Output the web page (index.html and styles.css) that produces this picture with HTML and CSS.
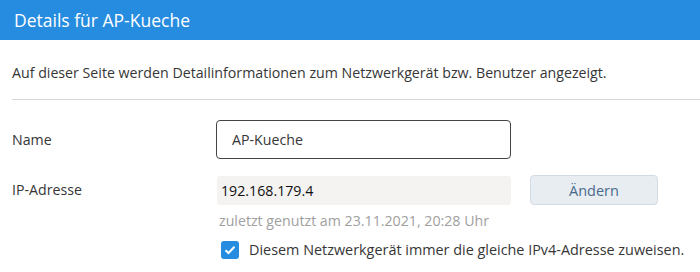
FILE: index.html
```html
<!DOCTYPE html>
<html lang="de">
<head>
    <meta charset="UTF-8">
    <meta name="viewport" content="width=device-width, initial-scale=1.0">
    <title>Details für AP-Kueche</title>
    <link rel="stylesheet" href="styles.css">
</head>
<body>
    <div class="header">
        <h1>Details für AP-Kueche</h1>
    </div>

    <div class="content">
        <p class="intro">Auf dieser Seite werden Detailinformationen zum Netzwerkgerät bzw. Benutzer angezeigt.</p>

        <div class="form-row name-row">
            <label for="name">Name</label>
            <input type="text" id="name" class="name-input" value="AP-Kueche">
        </div>

        <div class="form-row ip-row">
            <label>IP-Adresse</label>
            <div class="ip-field">
                <div class="ip-line">
                    <div class="ip-value">192.168.179.4</div>
                    <button type="button" class="change-btn">Ändern</button>
                </div>
                <div class="last-used">zuletzt genutzt am 23.11.2021, 20:28 Uhr</div>
                <label class="check">
                    <span class="check-box">
                        <svg width="12" height="10" viewBox="0 0 12 10"><path d="M1.5 5.2 L4.5 8 L10.5 1.8" fill="none" stroke="#fff" stroke-width="2"/></svg>
                    </span>
                    Diesem Netzwerkgerät immer die gleiche IPv4-Adresse zuweisen.
                </label>
            </div>
        </div>
    </div>
</body>
</html>
```

FILE: styles.css
```css
body {
    margin: 0;
    font-family: "Open Sans", sans-serif;
    color: #363636;
    background-color: white;
}
.header {
    background-color: #268cdf;
    height: 40px;
    display: flex;
    align-items: center;
    padding: 0 14px;
}
.header h1 {
    margin: 0;
    font-size: 17.5px;
    font-weight: normal;
    color: white;
}
.content {
    padding: 0 0 0 12px;
}
.intro {
    margin: 0;
    padding: 23px 0 17px;
    font-size: 14.2px;
    border-bottom: 1px solid #d6d6d6;
}
.form-row {
    display: flex;
}
.form-row > label {
    width: 204px;
    font-size: 14.2px;
}
.name-row {
    margin-top: 20px;
    align-items: center;
}
.name-input {
    width: 295px;
    height: 39px;
    box-sizing: border-box;
    border: 1px solid #444;
    border-radius: 4px;
    padding: 0 15px;
    font-family: inherit;
    font-size: 14.2px;
    color: #363636;
}
.ip-row {
    margin-top: 16px;
}
.ip-row > label {
    padding-top: 5px;
}
.ip-field {
    flex: 1;
}
.ip-line {
    display: flex;
    align-items: center;
    gap: 19px;
    margin-left: 1px;
}
.ip-value {
    width: 294px;
    height: 29px;
    box-sizing: border-box;
    background-color: #f4f3f1;
    border-radius: 3px;
    padding: 0 4px;
    font-size: 14.2px;
    line-height: 29px;
    color: #111;
}
.change-btn {
    width: 128px;
    height: 30px;
    background-color: #e8edf2;
    border: 1px solid #d3dbe3;
    border-radius: 4px;
    font-family: inherit;
    font-size: 14.5px;
    color: #4a6a8c;
}
.last-used {
    margin: 6px 0 0 3px;
    font-size: 14.2px;
    color: #a0a0a0;
}
.check {
    display: flex;
    align-items: center;
    gap: 10px;
    margin: 10px 0 0 5px;
    font-size: 14.4px;
}
.check-box {
    width: 18px;
    height: 18px;
    background-color: #268cdf;
    border-radius: 3px;
    display: flex;
    align-items: center;
    justify-content: center;
}
```
